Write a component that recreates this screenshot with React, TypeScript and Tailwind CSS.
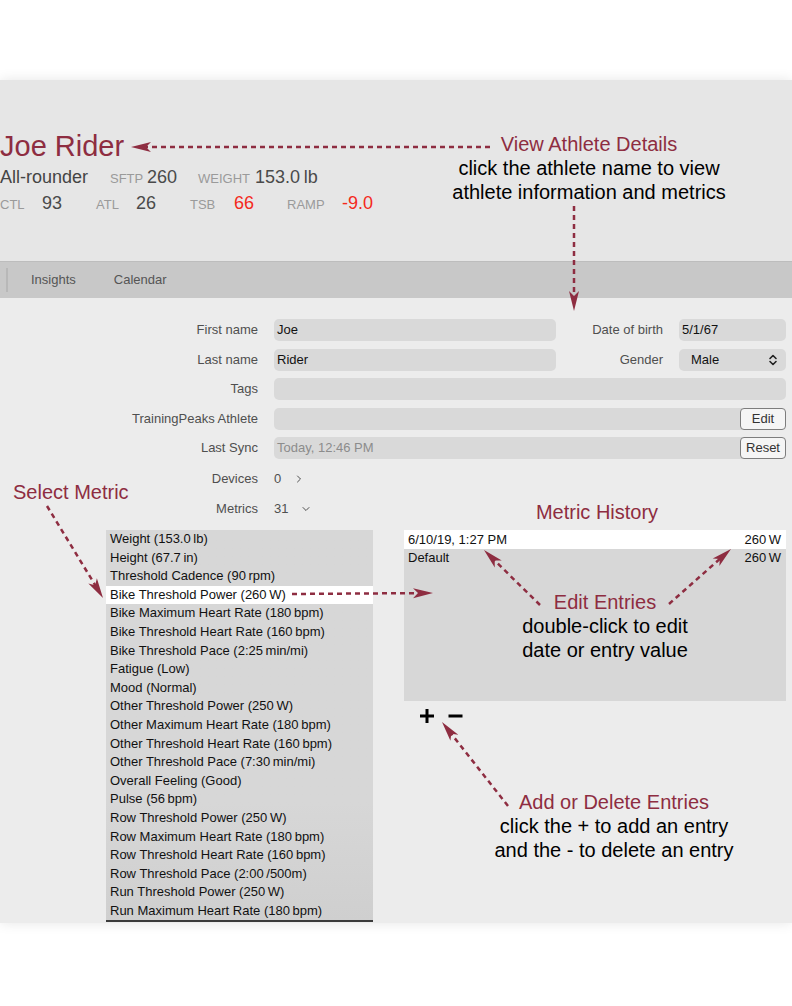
import React from "react";
import { ChevronRight, ChevronDown } from "lucide-react";

const MAROON = "#8e2d41";

const metrics = [
  "Weight (153.0\u2009lb)",
  "Height (67.7\u2009in)",
  "Threshold Cadence (90\u2009rpm)",
  "Bike Threshold Power (260\u2009W)",
  "Bike Maximum Heart Rate (180\u2009bpm)",
  "Bike Threshold Heart Rate (160\u2009bpm)",
  "Bike Threshold Pace (2:25\u2009min/mi)",
  "Fatigue (Low)",
  "Mood (Normal)",
  "Other Threshold Power (250\u2009W)",
  "Other Maximum Heart Rate (180\u2009bpm)",
  "Other Threshold Heart Rate (160\u2009bpm)",
  "Other Threshold Pace (7:30\u2009min/mi)",
  "Overall Feeling (Good)",
  "Pulse (56\u2009bpm)",
  "Row Threshold Power (250\u2009W)",
  "Row Maximum Heart Rate (180\u2009bpm)",
  "Row Threshold Heart Rate (160\u2009bpm)",
  "Row Threshold Pace (2:00\u2009/500m)",
  "Run Threshold Power (250\u2009W)",
  "Run Maximum Heart Rate (180\u2009bpm)",
];

// dashed callout line with a swept-back arrow head at (x2, y2)
function Arrow({ x1, y1, x2, y2 }: { x1: number; y1: number; x2: number; y2: number }) {
  const len = Math.hypot(x2 - x1, y2 - y1);
  const ux = (x2 - x1) / len;
  const uy = (y2 - y1) / len;
  const px = -uy;
  const py = ux;
  const head = 20;
  const half = 5;
  const bx = x2 - ux * head;
  const by = y2 - uy * head;
  const nx = x2 - ux * (head - 5);
  const ny = y2 - uy * (head - 5);
  const pts = [
    `${x2},${y2}`,
    `${bx + px * half},${by + py * half}`,
    `${nx},${ny}`,
    `${bx - px * half},${by - py * half}`,
  ].join(" ");
  return (
    <g>
      <line
        x1={x1}
        y1={y1}
        x2={x2 - ux * 14}
        y2={y2 - uy * 14}
        stroke={MAROON}
        strokeWidth={2.5}
        strokeDasharray="5 4"
      />
      <polygon points={pts} fill={MAROON} />
    </g>
  );
}

function Field({ children, className = "" }: { children?: React.ReactNode; className?: string }) {
  return (
    <div className={`flex h-[22px] items-center rounded-[5px] bg-[#d9d9d9] pl-[3px] text-[13px] text-[#111] ${className}`}>
      {children}
    </div>
  );
}

function Label({ children, className = "" }: { children: React.ReactNode; className?: string }) {
  return <div className={`text-right text-[13px] text-[#4f4f4f] ${className}`}>{children}</div>;
}

function SmallButton({ children }: { children: React.ReactNode }) {
  return (
    <div className="flex h-[22px] w-[46px] items-center justify-center rounded-[4px] border border-[#7d7d7d] bg-[#f5f5f5] text-[13px] text-[#333]">
      {children}
    </div>
  );
}

export default function App() {
  return (
    <div className="relative h-[1006px] w-[792px] overflow-hidden bg-white font-['Liberation_Sans',Arial,sans-serif]">
      <div className="mt-[80px] flex flex-col shadow-[0_0_12px_rgba(0,0,0,0.10)]">
        {/* athlete summary */}
        <header className="h-[181px] bg-[#e6e6e6] pt-[50px]">
          <div className="text-[29px] leading-[32px]" style={{ color: MAROON }}>
            Joe Rider
          </div>
          <div className="mt-[4px] flex items-baseline leading-[22px]">
            <span className="w-[110px] shrink-0 text-[18px] text-[#444]">All-rounder</span>
            <span className="w-[37px] shrink-0 text-[13px] text-[#9a9a9a]">SFTP</span>
            <span className="w-[51px] shrink-0 text-[18px] text-[#4a4a4a]">260</span>
            <span className="w-[57px] shrink-0 text-[13px] text-[#9a9a9a]">WEIGHT</span>
            <span className="text-[18px] text-[#4a4a4a]">153.0&#8201;lb</span>
          </div>
          <div className="mt-[2px] flex items-baseline leading-[22px]">
            <span className="w-[42px] shrink-0 text-[13px] text-[#9a9a9a]">CTL</span>
            <span className="w-[54px] shrink-0 text-[18px] text-[#4a4a4a]">93</span>
            <span className="w-[40px] shrink-0 text-[13px] text-[#9a9a9a]">ATL</span>
            <span className="w-[54px] shrink-0 text-[18px] text-[#4a4a4a]">26</span>
            <span className="w-[44px] shrink-0 text-[13px] text-[#9a9a9a]">TSB</span>
            <span className="w-[53px] shrink-0 text-[18px] text-[#f42a1c]">66</span>
            <span className="w-[55px] shrink-0 text-[13px] text-[#9a9a9a]">RAMP</span>
            <span className="text-[18px] text-[#f42a1c]">-9.0</span>
          </div>
        </header>

        {/* tab strip */}
        <nav className="flex h-[37px] items-center border-t border-[#bdbdbd] bg-[#c8c8c8] text-[13px] text-[#555]">
          <div className="ml-[6px] h-[24px] w-[2px] bg-[#b8b8b8]" />
          <span className="ml-[23px]">Insights</span>
          <span className="ml-[38px]">Calendar</span>
        </nav>

        {/* athlete form */}
        <main className="h-[625px] bg-[#ececec] pt-[21px]">
          <div className="flex flex-col gap-[7.5px] pr-[6px]">
            <div className="flex items-center">
              <Label className="w-[258px]">First name</Label>
              <Field className="ml-[16px] w-[282px]">Joe</Field>
              <Label className="flex-1">Date of birth</Label>
              <Field className="ml-[16px] w-[107px]">5/1/67</Field>
            </div>
            <div className="flex items-center">
              <Label className="w-[258px]">Last name</Label>
              <Field className="ml-[16px] w-[282px]">Rider</Field>
              <Label className="flex-1">Gender</Label>
              <Field className="ml-[16px] w-[107px] justify-between pl-[12px] pr-[8px]">
                <span>Male</span>
                <svg width="10" height="14" viewBox="0 0 10 14" fill="none" stroke="#222" strokeWidth="1.6" strokeLinecap="round" strokeLinejoin="round">
                  <path d="M2 5.5 L5 2.5 L8 5.5" />
                  <path d="M2 8.5 L5 11.5 L8 8.5" />
                </svg>
              </Field>
            </div>
            <div className="flex items-center">
              <Label className="w-[258px]">Tags</Label>
              <Field className="ml-[16px] flex-1" />
            </div>
            <div className="flex items-center">
              <Label className="w-[258px]">TrainingPeaks Athlete</Label>
              <Field className="ml-[16px] flex-1 justify-end">
                <SmallButton>Edit</SmallButton>
              </Field>
            </div>
            <div className="flex items-center">
              <Label className="w-[258px]">Last Sync</Label>
              <Field className="ml-[16px] flex-1 justify-between">
                <span className="text-[#8c8c8c]">Today, 12:46 PM</span>
                <SmallButton>Reset</SmallButton>
              </Field>
            </div>
          </div>

          <div className="mt-[9px] flex flex-col gap-[7.5px]">
            <div className="flex h-[22px] items-center">
              <Label className="w-[258px]">Devices</Label>
              <span className="ml-[16px] text-[13px] text-[#4f4f4f]">0</span>
              <ChevronRight className="ml-[12px] text-[#4f4f4f]" size={12} strokeWidth={2} />
            </div>
            <div className="flex h-[22px] items-center">
              <Label className="w-[258px]">Metrics</Label>
              <span className="ml-[16px] text-[13px] text-[#4f4f4f]">31</span>
              <ChevronDown className="ml-[12px] text-[#4f4f4f]" size={12} strokeWidth={2} />
            </div>
          </div>

          <div className="mt-[10.5px] flex items-start">
            <ul className="ml-[106px] w-[267px] border-b-2 border-[#3c3c3c] bg-gradient-to-b from-[#d7d7d7] from-70% to-[#cfcfcf] text-[13px] text-[#111]">
              {metrics.map((m, i) => (
                <li key={m} className={`h-[18.6px] pl-[4px] leading-[18.6px] ${i === 3 ? "bg-white" : ""}`}>
                  {m}
                </li>
              ))}
            </ul>

            <div className="ml-[31px] w-[382px]">
              <div className="h-[171px] bg-[#d7d7d7] text-[13px] text-[#111]">
                <div className="flex h-[18.6px] items-center justify-between bg-white pl-[4px] pr-[5px]">
                  <span>6/10/19, 1:27 PM</span>
                  <span>260&#8201;W</span>
                </div>
                <div className="flex h-[18.6px] items-center justify-between pl-[4px] pr-[5px]">
                  <span>Default</span>
                  <span>260&#8201;W</span>
                </div>
              </div>
              <div className="mt-[5px] flex h-[20px] items-center pl-[15px]">
                <svg width="16" height="16" viewBox="0 0 16 16" stroke="#000" strokeWidth="3">
                  <path d="M8 1 V15 M1 8 H15" />
                </svg>
                <svg className="ml-[13px]" width="15" height="16" viewBox="0 0 15 16" stroke="#000" strokeWidth="3">
                  <path d="M0.5 8 H14.5" />
                </svg>
              </div>
            </div>
          </div>
        </main>
      </div>

      {/* callouts */}
      <svg className="pointer-events-none absolute left-0 top-0" width="792" height="1006">
        <Arrow x1={490} y1={147} x2={131} y2={147} />
        <Arrow x1={574} y1={206} x2={574} y2={311} />
        <Arrow x1={47} y1={506} x2={103} y2={598} />
        <Arrow x1={292} y1={594} x2={433} y2={593} />
        <Arrow x1={540} y1={605} x2={484} y2={550} />
        <Arrow x1={669} y1={604} x2={731} y2={549} />
        <Arrow x1={508} y1={806} x2={442} y2={722} />
      </svg>

      <div className="pointer-events-none absolute left-[439px] top-[132px] w-[300px] text-center text-[20px] leading-[24px] text-black">
        <div style={{ color: MAROON }}>View Athlete Details</div>
        <div>click the athlete name to view</div>
        <div>athlete information and metrics</div>
      </div>

      <div className="pointer-events-none absolute left-[13px] top-[480px] text-[20px] leading-[24px]" style={{ color: MAROON }}>
        Select Metric
      </div>

      <div className="pointer-events-none absolute left-[497px] top-[500px] w-[200px] text-center text-[20px] leading-[24px]" style={{ color: MAROON }}>
        Metric History
      </div>

      <div className="pointer-events-none absolute left-[505px] top-[590px] w-[200px] text-center text-[20px] leading-[24px] text-black">
        <div style={{ color: MAROON }}>Edit Entries</div>
        <div>double-click to edit</div>
        <div>date or entry value</div>
      </div>

      <div className="pointer-events-none absolute left-[464px] top-[790px] w-[300px] text-center text-[20px] leading-[24px] text-black">
        <div style={{ color: MAROON }}>Add or Delete Entries</div>
        <div>click the + to add an entry</div>
        <div>and the - to delete an entry</div>
      </div>
    </div>
  );
}
